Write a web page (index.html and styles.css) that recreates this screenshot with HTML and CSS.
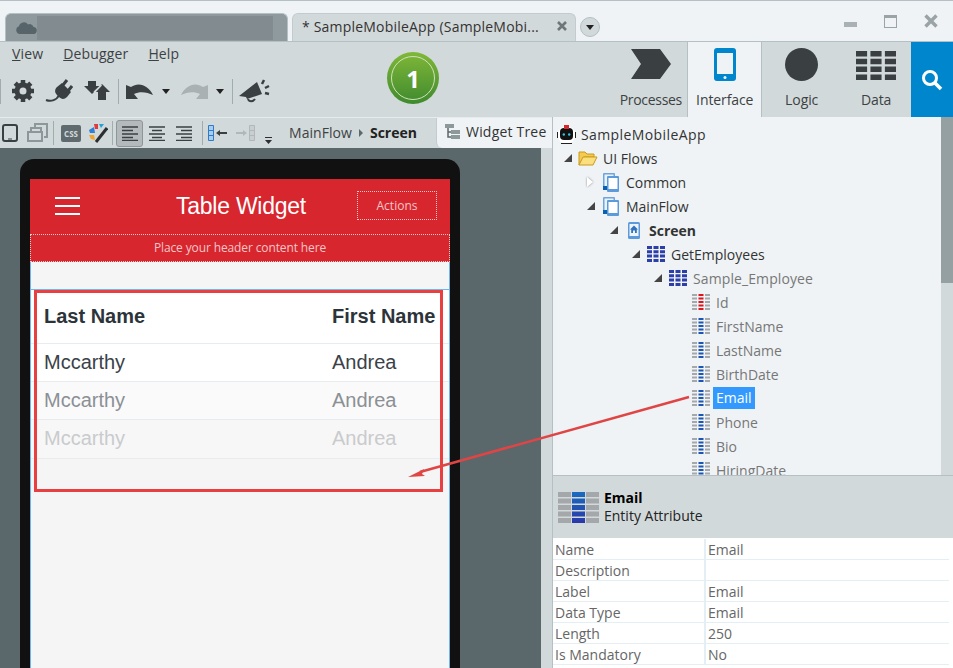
FILE: index.html
```html
<!DOCTYPE html>
<html lang="en">
<head>
  <meta charset="UTF-8">
  <title>Service Studio - SampleMobileApp</title>
  <link rel="stylesheet" href="styles.css">
</head>
<body>
  <svg class="defs" width="0" height="0">
    <symbol id="attr" viewBox="0 0 18 16">
      <path fill="#a5a8ab" d="M0 0h5v2H0zM0 3.500h5v2H0zM0 7h5v2H0zM0 10.500h5v2H0zM0 14h5v2H0zM13 0h5v2h-5zM13 3.500h5v2h-5zM13 7h5v2h-5zM13 10.500h5v2h-5zM13 14h5v2h-5z"/>
      <path fill="currentColor" d="M6.500 0h5v2h-5zM6.500 3.500h5v2h-5zM6.500 7h5v2h-5zM6.500 10.500h5v2h-5zM6.500 14h5v2h-5z"/>
    </symbol>
    <symbol id="entity" viewBox="0 0 18 16" preserveAspectRatio="none">
      <path fill="currentColor" d="M0 0h5v3H0zM6.500 0h5v3h-5zM13 0h5v3h-5zM0 4.300h5v3H0zM6.500 4.300h5v3h-5zM13 4.300h5v3h-5zM0 8.600h5v3H0zM6.500 8.600h5v3h-5zM13 8.600h5v3h-5zM0 13h5v3H0zM6.500 13h5v3h-5zM13 13h5v3h-5z"/>
    </symbol>
    <symbol id="flow" viewBox="0 0 16 19">
      <rect x="0" y="0" width="12" height="16" rx="1" fill="#6ea5de"/>
      <rect x="1.500" y="1.500" width="9" height="13" fill="#eaf2fa"/>
      <rect x="4" y="3" width="12" height="16" rx="1" fill="#5b9bdc"/>
      <rect x="5.500" y="5" width="9" height="11" fill="#fff"/>
      <rect x="0" y="13" width="4" height="4" fill="#0d5fb0"/>
    </symbol>
    <linearGradient id="info-blue" x1="0" y1="0" x2="0" y2="1">
      <stop offset="0" stop-color="#1a6cc0"/>
      <stop offset="1" stop-color="#2a38a8"/>
    </linearGradient>
  </svg>

  <div class="window">
    <div class="tabbar">
      <div class="tab tab-other">
        <svg class="cloud" width="21" height="12" viewBox="0 0 21 12"><path fill="#57656a" d="M4 12a4 4 0 0 1-1-7.800A5 5 0 0 1 12 2.500 4 4 0 0 1 17.500 5 3.500 3.500 0 0 1 17 12z"/></svg>
        <div class="tab-blur"></div>
      </div>
      <div class="tab tab-active">
        <span class="tab-title">* SampleMobileApp (SampleMobi...</span>
        <svg class="tab-x" width="10" height="10" viewBox="0 0 10 10"><path d="M1 1l8 8M9 1l-8 8" stroke="#6d7679" stroke-width="2.600"/></svg>
      </div>
      <div class="tab-menu"><span class="caret"></span></div>
      <div class="win-btns">
        <span class="win-min"></span>
        <span class="win-max"></span>
        <svg width="14" height="14" viewBox="0 0 14 14"><path d="M1.500 1.500l11 11M12.500 1.500l-11 11" stroke="#9aa3a6" stroke-width="3.400"/></svg>
      </div>
    </div>

    <div class="ribbon">
      <div class="ribbon-main">
        <div class="menu">
          <span class="menu-item"><u>V</u>iew</span>
          <span class="menu-item"><u>D</u>ebugger</span>
          <span class="menu-item"><u>H</u>elp</span>
        </div>
        <div class="tools">
          <span class="sep"></span>
          <svg class="t-gear" width="24" height="24" viewBox="0 0 24 24"><circle cx="12" cy="12" r="6" fill="none" stroke="#3a4042" stroke-width="5"/><path stroke="#3a4042" stroke-width="4.500" d="M12 1v5M12 18v5M1 12h5M18 12h5M4.200 4.200l3.500 3.500M16.300 16.300l3.500 3.500M19.800 4.200l-3.500 3.500M7.700 16.300l-3.500 3.500"/></svg>
          <svg class="t-plug" width="28" height="24" viewBox="0 0 28 24"><path fill="#3a4042" d="M12 8l5-4 9 9-4 5c-3 3-6 2-8 0l-2-2c-2-2-3-5 0-8z"/><path stroke="#3a4042" stroke-width="3" d="M18 6l4-5M23 12l4-5"/><path fill="none" stroke="#3a4042" stroke-width="2" d="M14 16c-2 5-8 7-13 5"/></svg>
          <svg class="t-sync" width="26" height="20" viewBox="0 0 26 20"><path fill="#3a4042" d="M0 5h4V0h8v5h4l-8 8zM10 11l8-8 8 8h-4v8h-8v-8z"/><path fill="#d2d9da" d="M9.500 10.500l1.500 1.500L18 4.500l-1-1z"/></svg>
          <span class="sep sep-undo"></span>
          <svg class="t-undo" width="27" height="17" viewBox="0 0 27 17"><path fill="#3a4042" d="M0 3v13h12L8 11c6-3 13-2 19 1C23 3 13-2 5 4L0 2z"/></svg>
          <span class="caret caret-undo"></span>
          <svg class="t-redo" width="27" height="17" viewBox="0 0 27 17"><path fill="#a9b1b3" d="M27 3v13H15l4-5C13 8 6 9 0 12 4 3 14-2 22 4l5-2z"/></svg>
          <span class="caret caret-redo"></span>
          <span class="sep sep-horn"></span>
          <svg class="t-horn" width="32" height="26" viewBox="0 0 32 26"><path fill="#3a4042" d="M0 18L18 4l5 12-15 5-1-2z"/><path fill="none" stroke="#3a4042" stroke-width="2" d="M9 21c1 3 5 3 7 0"/><path stroke="#3a4042" stroke-width="2.500" d="M23 6l2-4M26 10l4-2M26 15l4 1"/></svg>
        </div>
        <div class="badge"><span class="badge-ring">1</span></div>
      </div>
      <div class="ribbon-tab tab-processes">
        <svg width="40" height="30" viewBox="0 0 40 30"><path fill="#3a4042" d="M0 0h29l11 15-11 15H0l10-15z"/></svg>
        <span>Processes</span>
      </div>
      <div class="ribbon-tab ribbon-tab-on">
        <svg width="22" height="33" viewBox="0 0 22 33"><rect width="22" height="33" rx="3" fill="#0086cc"/><rect x="3" y="5" width="16" height="21" fill="#eff3f6"/><circle cx="11" cy="29.500" r="1.500" fill="#eff3f6"/></svg>
        <span>Interface</span>
      </div>
      <div class="ribbon-tab">
        <svg width="33" height="33" viewBox="0 0 33 33"><circle cx="16.500" cy="16.500" r="16.500" fill="#3a4042"/></svg>
        <span>Logic</span>
      </div>
      <div class="ribbon-tab">
        <svg class="t-data" width="40" height="29" color="#3a4042"><use href="#entity"/></svg>
        <span>Data</span>
      </div>
      <div class="search">
        <svg width="22" height="22" viewBox="0 0 22 22"><circle cx="9" cy="9" r="6.500" fill="none" stroke="#fff" stroke-width="3"/><path d="M14 14l6 6" stroke="#fff" stroke-width="3.500"/></svg>
      </div>
    </div>

    <div class="work">
      <div class="left">
        <div class="toolbar">
          <svg class="b-tablet" width="16" height="18" viewBox="0 0 16 18"><rect x="1" y="1" width="14" height="16" rx="2" fill="none" stroke="#3a4042" stroke-width="2"/><path stroke="#3a4042" d="M6 15h4"/></svg>
          <svg class="b-copy" width="21" height="20" viewBox="0 0 21 20"><path fill="none" stroke="#8d9699" stroke-width="2" d="M8 5V1h12v13h-3M1 9h14v9H1zM4 9V5h10v4"/></svg>
          <span class="sep sep-short"></span>
          <span class="b-css">CSS</span>
          <svg class="b-palette" width="19" height="19" viewBox="0 0 19 19"><path fill="#e23a3a" d="M5 0h4v5H6z"/><path fill="#2f7fd6" d="M0 6l5-3 1 6H1z"/><path fill="#f2a52b" d="M0 11h5l1 5-4-1z"/><path fill="#27a0d8" d="M10 0h5l-3 4z"/><path stroke="#2b2f31" stroke-width="3" d="M18 4L7 18"/></svg>
          <span class="sep sep-short"></span>
          <span class="align-btn align-on">
            <svg width="16" height="15" viewBox="0 0 16 15"><path stroke="#3a4042" stroke-width="1.500" d="M0 1h16M0 4.500h11M0 8h16M0 11.500h11M0 14.500h16"/></svg>
          </span>
          <span class="align-btn">
            <svg width="16" height="15" viewBox="0 0 16 15"><path stroke="#3a4042" stroke-width="1.500" d="M0 1h16M3 4.500h10M0 8h16M3 11.500h10M0 14.500h16"/></svg>
          </span>
          <span class="align-btn">
            <svg width="16" height="15" viewBox="0 0 16 15"><path stroke="#3a4042" stroke-width="1.500" d="M0 1h16M5 4.500h11M0 8h16M5 11.500h11M0 14.500h16"/></svg>
          </span>
          <span class="sep sep-short"></span>
          <svg class="b-indent" width="19" height="16" viewBox="0 0 19 16"><path fill="#a8cdee" stroke="#2e7cc9" d="M.500.500h5v15h-5z"/><path stroke="#2e7cc9" d="M.500 5.500h5M.500 10.500h5"/><path fill="#3a4042" d="M8 8l4-3v2h7v2h-7v2z"/></svg>
          <svg class="b-outdent" width="19" height="16" viewBox="0 0 19 16"><path fill="#c9cfd1" stroke="#b0b8ba" d="M13.500.500h5v15h-5z"/><path stroke="#b0b8ba" d="M13.500 5.500h5M13.500 10.500h5"/><path fill="#b0b8ba" d="M11 8L7 5v2H0v2h7v2z"/></svg>
          <svg class="b-more" width="7" height="7" viewBox="0 0 7 7"><path d="M0 0h7v1H0zM0 3h7L3.500 7z" fill="#2b2f31"/></svg>
          <span class="crumb">MainFlow</span>
          <span class="crumb-arrow"></span>
          <b class="crumb-now">Screen</b>
          <div class="widget-tab">
            <svg width="15" height="15" viewBox="0 0 15 15"><path fill="none" stroke="#5d686c" stroke-width="1.500" d="M3 4v9h3M3 8h3"/><path fill="#8d989b" d="M0 0h9v4H0zM6 6h9v4H6zM6 11h9v4H6z"/></svg>
            <span>Widget Tree</span>
          </div>
        </div>
        <div class="canvas-row">
          <div class="canvas">
            <div class="phone">
              <div class="screen">
                <div class="app-head">
                  <div class="burger"><i></i><i></i><i></i></div>
                  <div class="app-title">Table Widget</div>
                  <div class="actions">Actions</div>
                </div>
                <div class="app-sub">Place your header content here</div>
                <div class="app-gap"></div>
                <div class="table">
                  <div class="tr th"><span class="c1">Last Name</span><span>First Name</span></div>
                  <div class="tr"><span class="c1">Mccarthy</span><span>Andrea</span></div>
                  <div class="tr tr-fade1"><span class="c1">Mccarthy</span><span>Andrea</span></div>
                  <div class="tr tr-fade2"><span class="c1">Mccarthy</span><span>Andrea</span></div>
                </div>
              </div>
            </div>
          </div>
          <div class="canvas-scroll"></div>
        </div>
      </div>

      <div class="right">
        <div class="tree-wrap">
          <div class="tree">
            <div class="node root">
              <svg width="19" height="19" viewBox="0 0 19 19"><circle cx="9.500" cy="10" r="9" fill="#fff"/><path fill="none" stroke="#222" d="M.500 7v6M18.500 7v6M4 18.500h11"/><rect x="3" y="3" width="13" height="12" rx="4" fill="#111"/><rect x="7" y="0" width="5" height="4" fill="#d8262f"/><circle cx="6.800" cy="9.500" r="1.200" fill="#35c4e8"/><circle cx="12.200" cy="9.500" r="1.200" fill="#35c4e8"/></svg>
              <span class="root-name">SampleMobileApp</span>
            </div>
            <div class="node lvl1"><span class="arrow"></span><span class="ico">
              <svg width="20" height="16" viewBox="0 0 20 16"><path fill="#f4cb4e" stroke="#c99a1e" d="M1 15V2h6l2 2h7v3H6L1 15z"/><path fill="#fbdf7e" stroke="#c99a1e" d="M1 15l4-8h14l-4 8z"/></svg>
            </span><span>UI Flows</span></div>
            <div class="node lvl2"><span class="arrow arrow-open"></span><span class="ico"><svg width="16" height="19"><use href="#flow"/></svg></span><span>Common</span></div>
            <div class="node lvl2"><span class="arrow"></span><span class="ico"><svg width="16" height="19"><use href="#flow"/></svg></span><span>MainFlow</span></div>
            <div class="node lvl3"><span class="arrow"></span><span class="ico">
              <svg width="12" height="17" viewBox="0 0 12 17"><rect width="12" height="17" rx="1.500" fill="#5b9bdc"/><rect x="1.500" y="2" width="9" height="12" fill="#eef4fa"/><path fill="#2f73bd" d="M6 3.500L10 7.500H8.800V11H7V8.500H5V11H3.200V7.500H2z"/></svg>
            </span><b>Screen</b></div>
            <div class="node lvl4"><span class="arrow"></span><span class="ico"><svg width="18" height="16" color="#2c3fa8"><use href="#entity"/></svg></span><span>GetEmployees</span></div>
            <div class="node lvl5 muted"><span class="arrow"></span><span class="ico"><svg width="18" height="16" color="#2c3fa8"><use href="#entity"/></svg></span><span>Sample_Employee</span></div>
            <div class="node lvl6 muted"><span class="ico"><svg width="18" height="16" color="#e0141c"><use href="#attr"/></svg></span><span>Id</span></div>
            <div class="node lvl6 muted"><span class="ico"><svg width="18" height="16" color="#1c56b4"><use href="#attr"/></svg></span><span>FirstName</span></div>
            <div class="node lvl6 muted"><span class="ico"><svg width="18" height="16" color="#1c56b4"><use href="#attr"/></svg></span><span>LastName</span></div>
            <div class="node lvl6 muted"><span class="ico"><svg width="18" height="16" color="#1c56b4"><use href="#attr"/></svg></span><span>BirthDate</span></div>
            <div class="node lvl6 muted"><span class="ico"><svg width="18" height="16" color="#1c56b4"><use href="#attr"/></svg></span><span class="selected">Email</span></div>
            <div class="node lvl6 muted"><span class="ico"><svg width="18" height="16" color="#1c56b4"><use href="#attr"/></svg></span><span>Phone</span></div>
            <div class="node lvl6 muted"><span class="ico"><svg width="18" height="16" color="#1c56b4"><use href="#attr"/></svg></span><span>Bio</span></div>
            <div class="node lvl6 muted"><span class="ico"><svg width="18" height="16" color="#1c56b4"><use href="#attr"/></svg></span><span>HiringDate</span></div>
          </div>
          <div class="tree-scroll"><div class="thumb"></div></div>
        </div>
        <div class="info">
          <svg width="41" height="31" viewBox="0 0 41 31"><path fill="#a5a8ab" d="M0 0h13v5H0zM0 6.500h13v5H0zM0 13h13v5H0zM0 19.500h13v5H0zM0 26h13v5H0zM28 0h13v5H28zM28 6.500h13v5H28zM28 13h13v5H28zM28 19.500h13v5H28zM28 26h13v5H28z"/><path fill="url(#info-blue)" d="M14 0h13v5H14zM14 6.500h13v5H14zM14 13h13v5H14zM14 19.500h13v5H14zM14 26h13v5H14z"/></svg>
          <div class="info-text"><b>Email</b><span>Entity Attribute</span></div>
        </div>
        <div class="props">
          <div class="prop"><span>Name</span><span>Email</span></div>
          <div class="prop"><span>Description</span><span></span></div>
          <div class="prop"><span>Label</span><span>Email</span></div>
          <div class="prop"><span>Data Type</span><span>Email</span></div>
          <div class="prop"><span>Length</span><span>250</span></div>
          <div class="prop"><span>Is Mandatory</span><span>No</span></div>
        </div>
      </div>
    </div>

    <!-- Annotation drawn over the screenshot -->
    <div class="mark-box"></div>
    <svg class="mark-arrow" width="953" height="668" viewBox="0 0 953 668">
      <path d="M689 397L420 472" stroke="#e04545" stroke-width="2.500"/>
      <path d="M408 477l16-8-2 5 3 2z" fill="#e04545"/>
    </svg>
  </div>
</body>
</html>
```

FILE: styles.css
```css
body {
  margin: 0;
  font-family: 'Open Sans', 'Noto Sans', sans-serif;
  font-size: 14px;
  color: #333;
  overflow: hidden;
}

.defs {
  position: absolute;
}

.window {
  position: relative;
  width: 953px;
  height: 668px;
  background: #eff3f6;
  display: flex;
  flex-direction: column;
  overflow: hidden;
}

/* Tab bar */
.tabbar {
  height: 40px;
  border-top: 1px solid #b4c0c3;
  display: flex;
  align-items: flex-end;
  padding-left: 5px;
  box-sizing: content-box;
}

.tab {
  height: 28px;
  border-radius: 6px 6px 0 0;
  box-sizing: border-box;
  display: flex;
  align-items: center;
}

.tab-other {
  width: 283px;
  background: #8e9a9e;
  padding-left: 10px;
  margin-right: 4px;
  border: 1px solid #b4c0c3;
  border-bottom: 0;
}

.cloud {
  flex-shrink: 0;
}

.tab-blur {
  width: 236px;
  height: 24px;
  background: #818b90;
}

.tab-active {
  width: 284px;
  background: #d2d9da;
  padding-left: 9px;
  border: 1px solid #c2ccce;
  border-bottom: 0;
  justify-content: space-between;
  padding-right: 8px;
}

.tab-title {
  white-space: nowrap;
  letter-spacing: 0.2px;
  padding-bottom: 2px;
}

.tab-x {
  margin-bottom: 3px;
}

.tab-menu {
  width: 20px;
  height: 20px;
  margin: 0 0 4px 4px;
  border-radius: 50%;
  background: #d2d9da;
  border: 1px solid #b4c0c3;
  box-sizing: border-box;
  display: flex;
  align-items: center;
  justify-content: center;
}

.caret {
  display: inline-block;
  width: 0;
  height: 0;
  border-left: 4px solid transparent;
  border-right: 4px solid transparent;
  border-top: 5px solid #222;
}

.win-btns {
  margin-left: auto;
  height: 40px;
  display: flex;
  align-items: center;
  padding-right: 15px;
  box-sizing: border-box;
  gap: 27px;
}

.win-min {
  width: 13px;
  height: 5px;
  background: #a9b1b4;
  margin-top: 7px;
}

.win-max {
  width: 13px;
  height: 13px;
  border: 1px solid #9aa3a6;
  border-top-width: 3px;
  box-sizing: border-box;
}

/* Ribbon */
.ribbon {
  height: 76px;
  border-top: 1px solid #b4c0c3;
  background: #d2d9da;
  display: flex;
  box-sizing: border-box;
  flex-shrink: 0;
}

.ribbon-main {
  width: 618px;
  position: relative;
  box-sizing: border-box;
}

.menu {
  display: flex;
  gap: 20px;
  padding: 2px 0 0 12px;
  height: 27px;
  box-sizing: border-box;
  color: #3c4244;
  letter-spacing: 0.15px;
}

.tools {
  display: flex;
  align-items: center;
  height: 36px;
  margin-top: 4px;
}

.sep {
  width: 1px;
  height: 25px;
  background: #a2abae;
  flex-shrink: 0;
}

.t-gear { margin-left: 10px; }
.t-plug { margin-left: 10px; }
.t-sync { margin-left: 11px; }
.sep-undo { margin-left: 8px; }
.t-undo { margin-left: 7px; }
.caret-undo { margin-left: 9px; }
.t-redo { margin-left: 11px; }
.caret-redo { margin-left: 8px; }
.sep-horn { margin-left: 8px; }
.t-horn { margin-left: 6px; }

.badge {
  position: absolute;
  left: 387px;
  top: 10px;
  width: 52px;
  height: 52px;
  border-radius: 50%;
  background: linear-gradient(#80b838, #3f8a2e);
  display: flex;
  align-items: center;
  justify-content: center;
}

.badge-ring {
  width: 44px;
  height: 44px;
  border: 1px solid #cfe3b8;
  border-radius: 50%;
  box-sizing: border-box;
  color: #fff;
  font-size: 24px;
  font-weight: 700;
  display: flex;
  align-items: center;
  justify-content: center;
}

.ribbon-tab {
  width: 70px;
  display: flex;
  flex-direction: column;
  align-items: center;
  justify-content: space-between;
  padding: 7px 0 8px;
  box-sizing: border-box;
  color: #3c4244;
}

.ribbon-tab span {
  letter-spacing: -0.1px;
}

.tab-processes {
  padding-right: 3px;
}

.tab-processes span {
  letter-spacing: -0.3px;
}

.ribbon-tab-on {
  width: 75px;
  background: #eff3f6;
  border-left: 1px solid #b4c0c3;
  border-right: 1px solid #b4c0c3;
  padding-top: 6px;
}

.ribbon-tab + .ribbon-tab + .ribbon-tab {
  width: 79px;
  padding-top: 6px;
}

.ribbon-tab-on + .ribbon-tab + .ribbon-tab {
  width: 70px;
  padding-top: 9px;
}

.search {
  width: 42px;
  background: #0086cc;
  display: flex;
  align-items: center;
  justify-content: center;
  margin-left: auto;
}

/* Work area */
.work {
  flex: 1;
  display: flex;
  min-height: 0;
}

.left {
  width: 552px;
  display: flex;
  flex-direction: column;
}

.toolbar {
  height: 31px;
  background: #d2d9da;
  border-top: 1px solid #e6ebec;
  box-sizing: border-box;
  display: flex;
  align-items: center;
  flex-shrink: 0;
}

.b-tablet { margin-left: 2px; }
.b-copy { margin-left: 9px; }
.toolbar .sep-short { height: 24px; margin-left: 5px; }
.b-css {
  margin-left: 7px;
  width: 20px;
  height: 17px;
  background: #5f6a6e;
  border-radius: 2px;
  color: #d2d9da;
  font-size: 8px;
  font-weight: 700;
  text-align: center;
  line-height: 17px;
}
.b-palette { margin-left: 8px; margin-right: -1px; }
.align-btn {
  width: 27px;
  height: 27px;
  display: flex;
  align-items: center;
  justify-content: center;
  box-sizing: border-box;
}
.align-on {
  margin-left: 3px;
  background: #b4babb;
  border: 1px solid #8e9698;
  border-radius: 3px;
}
.b-indent { margin-left: 5px; }
.b-outdent { margin-left: 9px; }
.b-more { margin: 14px 0 0 10px; align-self: center; }
.crumb { margin: 0 0 2px 17px; color: #3c4244; letter-spacing: 0.05px; }
.crumb-arrow {
  margin: 0 7px 1px 7px;
  border-top: 4px solid transparent;
  border-bottom: 4px solid transparent;
  border-left: 4px solid #5d686c;
}
.crumb-now { color: #222; margin-bottom: 2px; }

.widget-tab {
  margin-left: auto;
  width: 116px;
  height: 30px;
  align-self: flex-start;
  background: #eff3f6;
  border-left: 1px solid #c2ccce;
  border-radius: 0 0 0 6px;
  box-sizing: border-box;
  display: flex;
  align-items: center;
  gap: 6px;
  padding: 0 0 3px 8px;
  letter-spacing: 0.2px;
}

.canvas-row {
  flex: 1;
  display: flex;
  min-height: 0;
}

.canvas {
  flex: 1;
  background: #5a676b;
  padding: 11px 0 0 20px;
  overflow: hidden;
}

.canvas-scroll {
  width: 11px;
  background: #d2d9da;
}

.phone {
  width: 440px;
  height: 540px;
  background: #111;
  border-radius: 14px 14px 0 0;
  padding: 20px 10px 0;
  box-sizing: border-box;
}

.screen {
  height: 100%;
  background: #f5f5f5;
  border-left: 1px solid #6fb6f0;
  border-right: 1px solid #6fb6f0;
  font-family: 'Liberation Sans', Arial, sans-serif;
  box-sizing: border-box;
}

.app-head {
  height: 55px;
  margin: 0 -1px;
  background: #d8262f;
  display: flex;
  align-items: center;
  color: #fff;
  padding: 0 13px 2px 25px;
  box-sizing: border-box;
}

.burger {
  width: 25px;
  display: flex;
  flex-direction: column;
  gap: 6px;
}

.burger i {
  display: block;
  height: 2px;
  background: #fff;
}

.app-title {
  flex: 1;
  padding: 2px 0 0 45px;
  text-align: center;
  font-size: 23px;
  letter-spacing: -0.25px;
  box-sizing: border-box;
  white-space: nowrap;
}

.actions {
  width: 80px;
  height: 29px;
  border: 1px dotted #f3c6c8;
  box-sizing: border-box;
  font-family: 'Open Sans', sans-serif;
  font-size: 12px;
  color: #f3c6c8;
  text-align: center;
  line-height: 27px;
}

.app-sub {
  height: 28px;
  margin: 0 -1px;
  background: #d8262f;
  border: 1px dotted #f3c6c8;
  box-sizing: border-box;
  font-family: 'Open Sans', sans-serif;
  font-size: 12px;
  letter-spacing: -0.12px;
  color: #f3c6c8;
  text-align: center;
  line-height: 26px;
}

.app-gap {
  height: 28px;
  border-bottom: 1px solid #6fb6f0;
  box-sizing: border-box;
}

.table {
  background: #fff;
  color: #3a4248;
}

.tr {
  height: 38px;
  display: flex;
  align-items: center;
  padding-left: 13px;
  font-size: 20px;
  border-bottom: 1px solid #e8ecef;
  box-sizing: border-box;
}

.th {
  height: 54px;
  font-weight: 700;
  color: #2c343a;
}

.c1 {
  width: 288px;
}

.tr-fade1 {
  color: #8b9095;
  background: #fafafa;
}

.tr-fade2 {
  height: 39px;
  padding-bottom: 1px;
  color: #c9cbcd;
  background: #f7f7f7;
}

/* Right panel */
.right {
  flex: 1;
  display: flex;
  flex-direction: column;
  border-left: 1px solid #b4c0c3;
  min-width: 0;
}

.tree-wrap {
  height: 358px;
  display: flex;
  overflow: hidden;
  flex-shrink: 0;
}

.tree {
  flex: 1;
  padding-top: 5px;
}

.node {
  height: 24px;
  display: flex;
  align-items: center;
  white-space: nowrap;
}

.root { padding-left: 4px; gap: 5px; }
.root-name { letter-spacing: 0.4px; }
.lvl1 { padding-left: 10px; }
.lvl2 { padding-left: 33px; }
.lvl3 { padding-left: 56px; }
.lvl4 { padding-left: 78px; }
.lvl5 { padding-left: 100px; }
.lvl6 { padding-left: 137px; }

.muted { color: #777; }
.lvl5 span:last-child { letter-spacing: 0.1px; }

.arrow {
  width: 14px;
  height: 8px;
  flex-shrink: 0;
  position: relative;
}

.arrow::after {
  content: '';
  position: absolute;
  left: 1px;
  top: 0;
  width: 0;
  height: 0;
  border-bottom: 8px solid #444;
  border-left: 8px solid transparent;
}

.arrow-open::after {
  top: -1px;
  border: 5px solid transparent;
  border-left: 6px solid #fff;
  filter: drop-shadow(0 0 1px #888);
}

.ico {
  width: 22px;
  margin-right: 4px;
  flex-shrink: 0;
  display: flex;
  justify-content: center;
}

.selected {
  background: #3399ff;
  color: #fff;
  padding: 0 3px;
  margin-left: -3px;
  line-height: 22px;
}

.tree-scroll {
  width: 12px;
  background: #d2d9da;
  flex-shrink: 0;
}

.thumb {
  height: 166px;
  background: #95a0a3;
}

.info {
  height: 63px;
  border-top: 1px solid #b4c0c3;
  background: #d2d9da;
  display: flex;
  align-items: center;
  gap: 5px;
  padding: 0 0 0 5px;
  box-sizing: border-box;
  flex-shrink: 0;
}

.info-text {
  display: flex;
  flex-direction: column;
  line-height: 18px;
  color: #222;
}

.info-text b {
  color: #000;
}

.props {
  flex: 1;
  background: #fff;
  color: #666;
  padding: 0 4px 0 0;
}

.prop {
  height: 21px;
  display: flex;
  align-items: center;
  border-bottom: 1px solid #e3eef5;
  box-sizing: border-box;
}

.prop:first-child {
  height: 22px;
  padding-top: 1px;
}

.prop span:first-child {
  width: 153px;
  padding-left: 2px;
  height: 100%;
  box-sizing: border-box;
  border-right: 2px solid #e3eef5;
  line-height: 21px;
}

.prop span:last-child {
  padding-left: 2px;
  line-height: 21px;
}

/* Annotation */
.mark-box {
  position: absolute;
  left: 34px;
  top: 290px;
  width: 409px;
  height: 202px;
  border: 3px solid #e84040;
  box-sizing: border-box;
}

.mark-arrow {
  position: absolute;
  left: 0;
  top: 0;
}
```
